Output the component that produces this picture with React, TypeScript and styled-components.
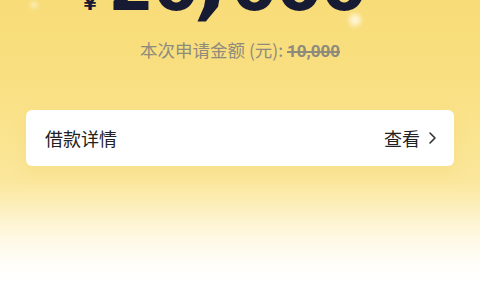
import React from 'react';
import styled, { createGlobalStyle } from 'styled-components';

const GlobalStyle = createGlobalStyle`
  * {
    box-sizing: border-box;
  }
  html,
  body {
    margin: 0;
    padding: 0;
    background: #fff;
  }
  body {
    font-family: 'Noto Sans CJK SC', 'Liberation Sans', sans-serif;
  }
`;

const PageStyle = styled.div`
  position: relative;
  width: 480px;
  height: 300px;
  overflow: hidden;
  padding: 0 26px;
  background: linear-gradient(
    180deg,
    #f8dc78 0%,
    #f9df80 25%,
    #fae48f 45%,
    #fbe79c 60%,
    #fcecb0 66%,
    #fdf3cd 73%,
    #fef9e6 80%,
    #fffdf7 87%,
    #ffffff 94%
  );
`;

const GlowStyle = styled.div<{ size: number; top: number; left: number }>`
  position: absolute;
  top: ${(p) => p.top}px;
  left: ${(p) => p.left}px;
  width: ${(p) => p.size}px;
  height: ${(p) => p.size}px;
  border-radius: 50%;
  background: rgba(255, 252, 235, 0.8);
  filter: blur(2.5px);
`;

const AmountStyle = styled.div`
  display: flex;
  justify-content: center;
  align-items: baseline;
  height: 66px;
  margin-top: -50px;
  padding-right: 30px;
  line-height: 66px;
  color: #171a33;
  font-family: 'DejaVu Sans', sans-serif;
  font-weight: 700;
  .currency {
    font-size: 18px;
    margin-right: 12px;
  }
  .value {
    font-size: 66px;
    letter-spacing: -1px;
  }
  .comma {
    display: inline-block;
    font-size: 80px;
    margin: 0 2px;
    transform: skewX(-10deg);
  }
`;

const SubTitleStyle = styled.p`
  margin: 24px 0 0;
  text-align: center;
  font-size: 17.5px;
  line-height: 20px;
  color: #8e8b7d;
  s {
    font-family: 'Roboto', 'Liberation Sans', sans-serif;
    font-weight: 700;
    font-size: 17px;
    color: #8e8b7d;
    text-decoration-thickness: 1.5px;
  }
`;

const CardStyle = styled.div`
  display: flex;
  align-items: center;
  justify-content: space-between;
  height: 56px;
  margin-top: 49px;
  padding: 0 17px 0 19px;
  background: #fff;
  border-radius: 6px;
  box-shadow: 0 6px 16px rgba(240, 205, 90, 0.25);
  font-size: 18px;
  color: #222;
  .more {
    display: flex;
    align-items: center;
    gap: 8px;
  }
`;

function App() {
  return (
    <>
      <GlobalStyle />
      <PageStyle>
        <GlowStyle size={12} top={14} left={349} />
        <GlowStyle size={6} top={2} left={31} />
        <AmountStyle>
          <span className="currency">¥</span>
          <span className="value">
            20<span className="comma">,</span>000
          </span>
        </AmountStyle>
        <SubTitleStyle>
          本次申请金额 (元):&nbsp;<s>10,000</s>
        </SubTitleStyle>
        <CardStyle>
          <span>借款详情</span>
          <span className="more">
            查看
            <svg width="9" height="14" viewBox="0 0 9 14" fill="none">
              <path d="M2 2l5 5-5 5" stroke="#333" strokeWidth="1.6" strokeLinecap="round" strokeLinejoin="round" />
            </svg>
          </span>
        </CardStyle>
      </PageStyle>
    </>
  );
}

export default App;
